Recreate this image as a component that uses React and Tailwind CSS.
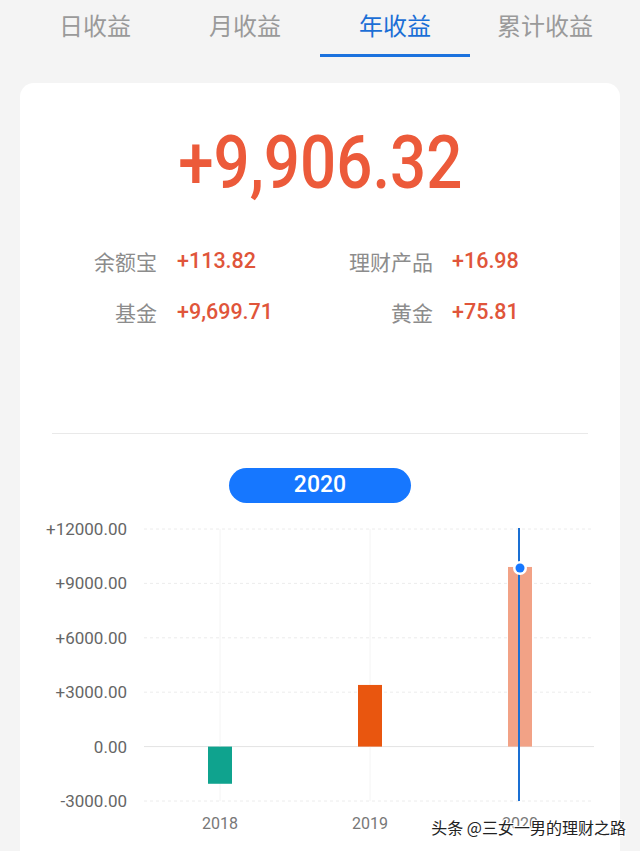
import React from 'react';

const tabs = ['日收益', '月收益', '年收益', '累计收益'];

const breakdown = [
  [
    { label: '余额宝', value: '+113.82' },
    { label: '理财产品', value: '+16.98' },
  ],
  [
    { label: '基金', value: '+9,699.71' },
    { label: '黄金', value: '+75.81' },
  ],
];

const yTicks = ['+12000.00', '+9000.00', '+6000.00', '+3000.00', '0.00', '-3000.00'];

// chart coords are relative to the card (x) and the svg top (y)
const STEP = 54.4;
const TOP = 14;
const ZERO = TOP + STEP * 4;
const toY = (v) => ZERO - (v / 3000) * STEP;

const bars = [
  { year: '2018', value: -2050, color: '#0fa38e' },
  { year: '2019', value: 3400, color: '#e9560f' },
  { year: '2020', value: 9906.32, color: '#f2a286' },
];

const Chart = () => {
  const left = 124;
  const right = 574;
  const xs = [200, 350, 500];
  return (
    <svg width="600" height="336" className="block">
      {yTicks.map((t, i) => {
        const y = TOP + i * STEP;
        return (
          <g key={t}>
            <line
              x1={left}
              x2={right}
              y1={y}
              y2={y}
              stroke={i === 4 ? '#e3e3e3' : '#ececec'}
              strokeDasharray={i === 4 ? '' : '3 3'}
            />
            <text
              x="107"
              y={y + 6}
              textAnchor="end"
              fontSize="17"
              fill="#666"
              fontFamily="Roboto, sans-serif"
            >
              {t}
            </text>
          </g>
        );
      })}
      {xs.slice(0, 2).map((x) => (
        <line key={x} x1={x} x2={x} y1={TOP} y2={TOP + STEP * 5} stroke="#f4f4f4" />
      ))}
      {bars.map((b, i) => {
        const y0 = toY(Math.max(b.value, 0));
        const y1 = toY(Math.min(b.value, 0));
        return (
          <g key={b.year}>
            <rect x={xs[i] - 12} y={y0} width="24" height={y1 - y0} fill={b.color} />
            <text
              x={xs[i]}
              y={314}
              textAnchor="middle"
              fontSize="16"
              fill="#777"
              fontFamily="Roboto, sans-serif"
            >
              {b.year}
            </text>
          </g>
        );
      })}
      <line x1="499" x2="499" y1={TOP - 1} y2={TOP + STEP * 5} stroke="#1a6fd3" strokeWidth="2" />
      <circle cx="500" cy={toY(9906.32) + 1} r="7" fill="#fff" />
      <circle cx="500" cy={toY(9906.32) + 1} r="4.5" fill="#1677ff" />
    </svg>
  );
};

const App = () => {
  return (
    <div className="min-h-screen bg-[#f4f4f4] flex flex-col relative overflow-hidden" style={{ height: 851 }}>
      <div className="grid grid-cols-4 px-[20px] h-[83px]">
        {tabs.map((t, i) => (
          <div key={t} className="flex flex-col items-center">
            <div
              className={`h-[54px] flex items-center text-[24px] font-['Noto_Sans_CJK_SC',sans-serif] ${
                i === 2 ? 'text-[#1b6fd6]' : 'text-[#9a9a9a]'
              }`}
              style={{ paddingBottom: 4 }}
            >
              {t}
            </div>
            {i === 2 && <div className="w-full h-[3px] bg-[#1b72de]" />}
          </div>
        ))}
      </div>

      <div className="mx-[20px] flex-1 bg-white rounded-t-[14px] flex flex-col">
        <div className="pt-[40px] h-[120px] flex justify-center">
          <div className="h-[80px] leading-[80px] text-[74px] font-medium text-[#ec5a3a] font-['Roboto',sans-serif] scale-x-[0.86] origin-center">
            +9,906.32
          </div>
        </div>

        <div className="mt-[33px] flex flex-col">
          {breakdown.map((row, ri) => (
            <div key={ri} className="h-[51px] flex items-center">
              <div className="w-[137px] text-right text-[21px] text-[#8c8c8c] font-['Noto_Sans_CJK_SC',sans-serif]">
                {row[0].label}
              </div>
              <div className="ml-[20px] w-[123px] text-[21.5px] font-medium text-[#e0553a] font-['Roboto',sans-serif]">
                {row[0].value}
              </div>
              <div className="w-[133px] text-right text-[21px] text-[#8c8c8c] font-['Noto_Sans_CJK_SC',sans-serif]">
                {row[1].label}
              </div>
              <div className="ml-[19px] text-[21.5px] font-medium text-[#e0553a] font-['Roboto',sans-serif]">
                {row[1].value}
              </div>
            </div>
          ))}
        </div>

        <div className="mt-[95px] mx-[32px] h-px bg-[#e9e9e9]" />

        <div className="mt-[34px] flex justify-center">
          <div className="w-[182px] h-[35px] rounded-full bg-[#1677ff] text-white text-[23px] font-medium font-['Roboto',sans-serif] flex items-center justify-center">
            2020
          </div>
        </div>

        <div className="mt-[12px]">
          <Chart />
        </div>
      </div>

      <div
        className="absolute right-[14px] bottom-[12px] text-[16px] text-[#222] font-['Noto_Sans_CJK_SC',sans-serif]"
        style={{
          textShadow:
            '1px 0 #fff, -1px 0 #fff, 0 1px #fff, 0 -1px #fff, 1px 1px #fff, -1px -1px #fff, 1px -1px #fff, -1px 1px #fff',
        }}
      >
        头条 @三女一男的理财之路
      </div>
    </div>
  );
};

export default App;
